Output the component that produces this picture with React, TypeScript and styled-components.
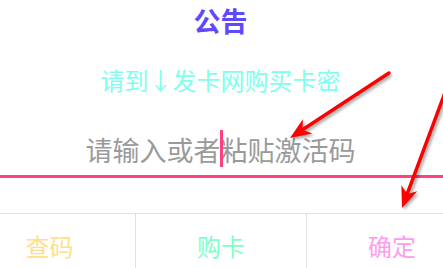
import React, { FC } from 'react';
import styled, { createGlobalStyle } from 'styled-components';

// dialog is wider than the window, so it gets cut on both sides
const GlobalStyle = createGlobalStyle`
  html, body {
    margin: 0;
    padding: 0;
    background: #ffffff;
    overflow: hidden;
    font-family: "Noto Sans CJK SC", "Noto Sans", sans-serif;
  }
`;

const Page = styled.div`
  position: relative;
  width: 443px;
  height: 268px;
  overflow: hidden;
`;

const Dialog = styled.div`
  width: 513px;
  margin-left: -36px;
  display: flex;
  flex-direction: column;
  align-items: center;
`;

const Title = styled.div`
  margin-top: 3px;
  font-size: 27px;
  line-height: 36px;
  font-weight: 700;
  color: #6048ff;
`;

const Notice = styled.div`
  margin-top: 24px;
  font-size: 24px;
  line-height: 34px;
  color: #80ffee;
`;

const InputRow = styled.div`
  position: relative;
  width: 100%;
  margin-top: 30px;
  height: 51px;
  display: flex;
  justify-content: center;
  align-items: center;
  border-bottom: 3px solid #ff4081;
  box-sizing: border-box;
  padding-bottom: 3px;
`;

const Placeholder = styled.span`
  font-size: 27px;
  line-height: 36px;
  color: #9a9a9a;
`;

const Caret = styled.span`
  position: absolute;
  left: 256px;
  top: 3px;
  width: 3px;
  height: 37px;
  background: #ff4081;
`;

const ButtonBar = styled.div`
  width: 100%;
  margin-top: 35px;
  height: 57px;
  display: grid;
  grid-template-columns: 1fr 1fr 1fr;
  border-top: 1px solid #e2e2e2;
`;

const BarButton = styled.div<{ $color: string; $divider?: boolean }>`
  display: flex;
  justify-content: center;
  align-items: center;
  padding-top: 6px;
  font-size: 24px;
  color: ${p => p.$color};
  border-left: ${p => (p.$divider ? '1px solid #e2e2e2' : 'none')};
`;

const Overlay = styled.svg`
  position: absolute;
  left: 0;
  top: 0;
  pointer-events: none;
`;

type Pt = [number, number];

const arrowHead = (tail: Pt, tip: Pt) => {
  const dx = tip[0] - tail[0];
  const dy = tip[1] - tail[1];
  const len = Math.hypot(dx, dy);
  const ux = dx / len;
  const uy = dy / len;
  const bx = tip[0] - ux * 21;
  const by = tip[1] - uy * 21;
  const ix = tip[0] - ux * 15;
  const iy = tip[1] - uy * 15;
  const px = -uy * 8.5;
  const py = ux * 8.5;
  return {
    shaftEnd: [ix, iy] as Pt,
    points: `${tip[0]},${tip[1]} ${bx + px},${by + py} ${ix},${iy} ${bx - px},${by - py}`,
  };
};

const Arrow: FC<{ tail: Pt; tip: Pt }> = ({ tail, tip }) => {
  const h = arrowHead(tail, tip);
  return (
    <g>
      <g transform="translate(2,2)" opacity="0.35" filter="url(#blur)">
        <line x1={tail[0]} y1={tail[1]} x2={h.shaftEnd[0]} y2={h.shaftEnd[1]} stroke="#000" strokeWidth="3.5" />
        <polygon points={h.points} fill="#000" />
      </g>
      <line x1={tail[0]} y1={tail[1]} x2={h.shaftEnd[0]} y2={h.shaftEnd[1]} stroke="#ff0000" strokeWidth="3.5" strokeLinecap="round" />
      <polygon points={h.points} fill="#ff0000" />
    </g>
  );
};

export default function App() {
  return (
    <Page>
      <GlobalStyle />
      <Dialog>
        <Title>公告</Title>
        <Notice>请到↓发卡网购买卡密</Notice>
        <InputRow>
          <Placeholder>请输入或者粘贴激活码</Placeholder>
          <Caret />
        </InputRow>
        <ButtonBar>
          <BarButton $color="#ffe08a">查码</BarButton>
          <BarButton $color="#7dffc8" $divider>购卡</BarButton>
          <BarButton $color="#ff9cf0" $divider>确定</BarButton>
        </ButtonBar>
      </Dialog>
      <Overlay width="443" height="268" viewBox="0 0 443 268">
        <defs>
          <filter id="blur" x="-20%" y="-20%" width="140%" height="140%">
            <feGaussianBlur stdDeviation="1.5" />
          </filter>
        </defs>
        <Arrow tail={[389, 73]} tip={[290, 138]} />
        <Arrow tail={[446, 90]} tip={[402, 208]} />
      </Overlay>
    </Page>
  );
}
